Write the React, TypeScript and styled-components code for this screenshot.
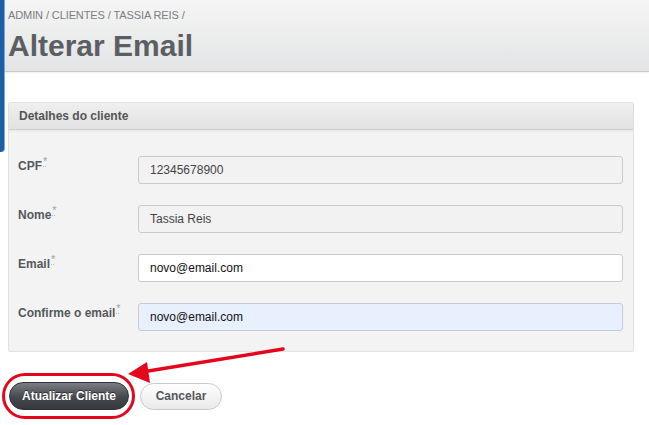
import React from "react";
import styled, { createGlobalStyle } from "styled-components";

const GlobalStyle = createGlobalStyle`
  html, body {
    margin: 0;
    padding: 0;
    background: #fff;
    font-family: "Liberation Sans", Arial, sans-serif;
  }
`;

const fields = [
  { label: "CPF", value: "12345678900", kind: "readonly" },
  { label: "Nome", value: "Tassia Reis", kind: "readonly" },
  { label: "Email", value: "novo@email.com", kind: "normal" },
  { label: "Confirme o email", value: "novo@email.com", kind: "filled" },
] as const;

type Kind = "readonly" | "normal" | "filled";

const App = () => {
  return (
    <Page>
      <GlobalStyle />
      <SideTab />
      <Header>
        <Crumbs>ADMIN / CLIENTES / TASSIA REIS /</Crumbs>
        <Title>Alterar Email</Title>
      </Header>
      <Panel>
        <PanelHead>Detalhes do cliente</PanelHead>
        <PanelBody>
          {fields.map((f) => (
            <Row key={f.label}>
              <Label>
                {f.label}
                <Req>*</Req>
              </Label>
              <Field $kind={f.kind}>{f.value}</Field>
            </Row>
          ))}
        </PanelBody>
      </Panel>
      <Actions>
        <Highlight>
          <Primary>Atualizar Cliente</Primary>
        </Highlight>
        <Secondary>Cancelar</Secondary>
      </Actions>
      <Arrow width="160" height="40" viewBox="0 0 160 40">
        <line x1="155" y1="2" x2="14" y2="25" stroke="#e3061c" strokeWidth="3.5" strokeLinecap="round" />
        <polygon points="0,27 19,15 22,36" fill="#e3061c" />
      </Arrow>
    </Page>
  );
};

export default App;

const Page = styled.div`
  position: relative;
  width: 649px;
  height: 425px;
  overflow: hidden;
`;

const SideTab = styled.div`
  position: absolute;
  left: 0;
  top: 0;
  width: 4px;
  height: 152px;
  background: #1c5fa6;
  border-right: 1px solid #7fa6cf;
  border-bottom-right-radius: 4px;
`;

const Header = styled.div`
  margin-left: 5px;
  height: 72px;
  box-sizing: border-box;
  padding: 9px 0 0 3px;
  background: linear-gradient(#f5f5f5, #e3e4e5);
  border-bottom: 1px solid #c9c9c9;
  box-shadow: 0 1px 2px rgba(0, 0, 0, 0.06);
`;

const Crumbs = styled.div`
  font-size: 11px;
  color: #7b7d80;
  line-height: 13px;
  letter-spacing: -0.1px;
`;

const Title = styled.h1`
  margin: 7px 0 0;
  font-size: 30px;
  line-height: 34px;
  font-weight: 700;
  color: #5b5f63;
  letter-spacing: 0;
`;

const Panel = styled.div`
  margin: 30px 15px 0 8px;
  border: 1px solid #e2e2e2;
  background: #f3f3f3;
  border-radius: 2px;
`;

const PanelHead = styled.div`
  height: 27px;
  box-sizing: border-box;
  padding-left: 10px;
  display: flex;
  align-items: center;
  font-size: 12px;
  font-weight: 700;
  color: #555;
  background: linear-gradient(#efefef, #e2e2e2);
  border-bottom: 1px solid #d0d0d0;
  box-shadow: 0 1px 2px rgba(0, 0, 0, 0.06);
`;

const PanelBody = styled.div`
  padding: 26px 10px 20px 9px;
  display: flex;
  flex-direction: column;
  gap: 21px;
`;

const Row = styled.div`
  display: flex;
  align-items: flex-start;
`;

const Label = styled.div`
  width: 120px;
  font-size: 12px;
  font-weight: 700;
  color: #55585b;
  padding-top: 3px;
`;

const Req = styled.span`
  font-size: 11px;
  font-weight: 400;
  color: #a0a0a0;
  vertical-align: super;
  line-height: 0;
  margin-left: 1px;
  text-decoration: underline dotted #bbb;
`;

const Field = styled.div<{ $kind: Kind }>`
  flex: 1;
  height: 28px;
  box-sizing: border-box;
  padding-left: 11px;
  display: flex;
  align-items: center;
  font-size: 12px;
  color: ${(p) => (p.$kind === "readonly" ? "#444" : "#111")};
  border: 1px solid ${(p) => (p.$kind === "filled" ? "#c3ccd8" : "#cacaca")};
  border-radius: 3px;
  background: ${(p) =>
    p.$kind === "readonly" ? "#f2f2f2" : p.$kind === "filled" ? "#e8f0fe" : "#fff"};
`;

const Actions = styled.div`
  margin: 21px 0 0 2px;
  display: flex;
  align-items: center;
  gap: 5px;
`;

const Highlight = styled.div`
  padding: 6px 3px 6px 4px;
  border: 3px solid #e3061c;
  border-radius: 24px;
`;

const Primary = styled.button`
  width: 120px;
  height: 28px;
  border: 1px solid #2e3134;
  border-radius: 14px;
  background: linear-gradient(#7a7e83, #45494d 55%, #36393c);
  color: #fff;
  font-family: "Liberation Sans", Arial, sans-serif;
  font-size: 12px;
  font-weight: 700;
  text-shadow: 0 -1px 0 rgba(0, 0, 0, 0.5);
  padding: 0;
`;

const Secondary = styled.button`
  width: 82px;
  height: 27px;
  border: 1px solid #c8c8c8;
  border-radius: 14px;
  background: linear-gradient(#ffffff, #e9e9e9);
  color: #55585b;
  font-family: "Liberation Sans", Arial, sans-serif;
  font-size: 12px;
  font-weight: 700;
  padding: 0;
`;

const Arrow = styled.svg`
  position: absolute;
  left: 128px;
  top: 347px;
`;
